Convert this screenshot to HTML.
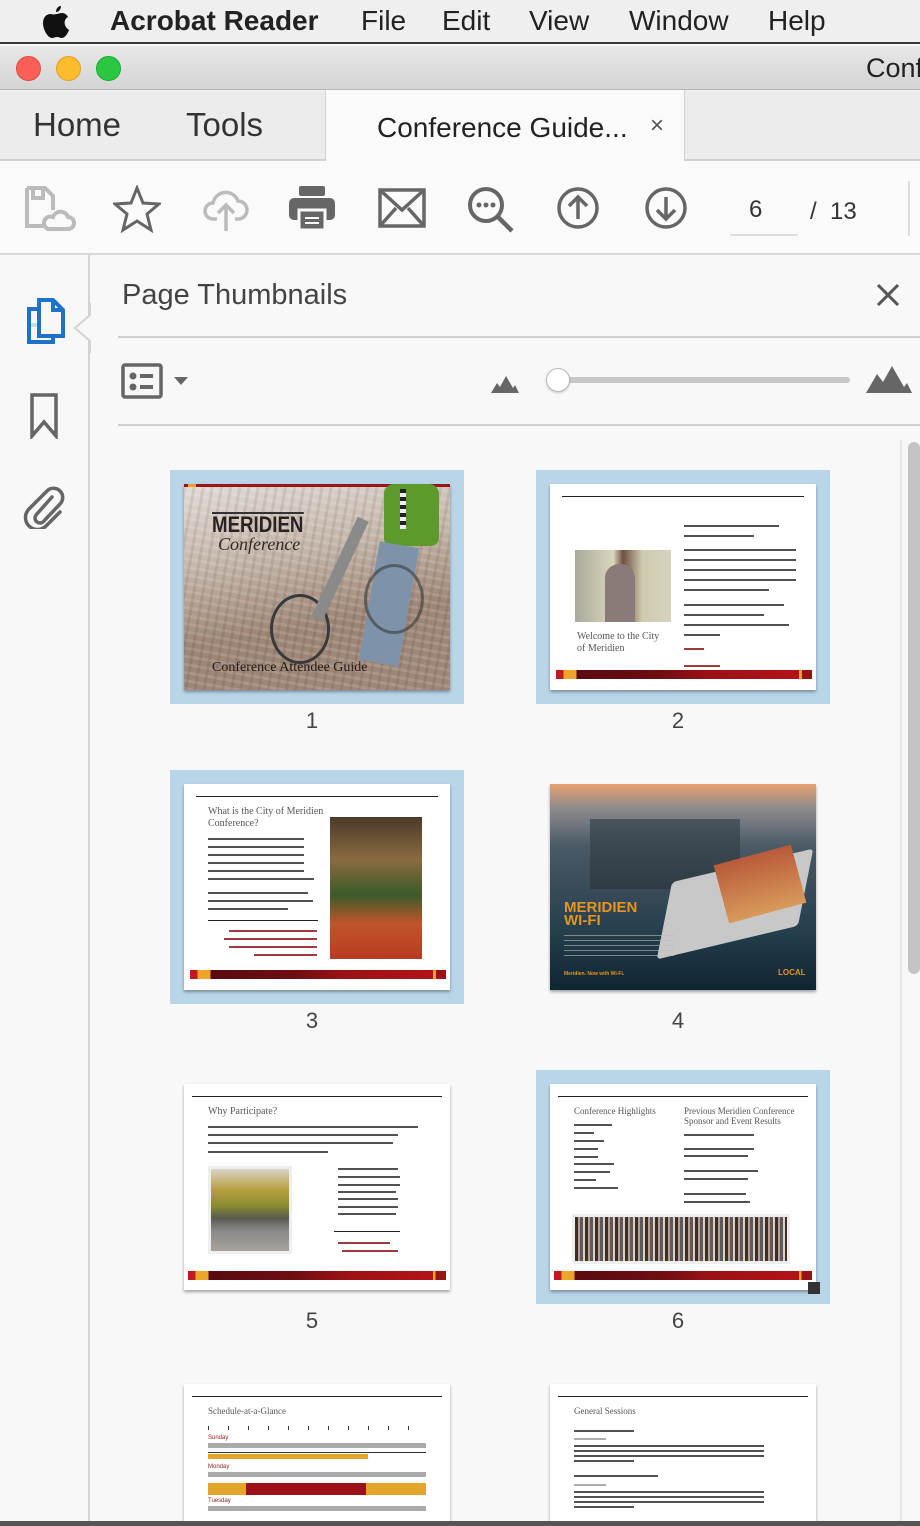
<!DOCTYPE html>
<html><head><meta charset="utf-8">
<style>
*{margin:0;padding:0;box-sizing:border-box}
body{width:920px;height:1526px;overflow:hidden;background:#f8f8f8;font-family:"Liberation Sans",sans-serif;position:relative;color:#333}
.a{position:absolute}
.menu{left:0;top:0;width:920px;height:44px;background:#efefef;border-bottom:2px solid #3a3a3a}
.menu span{position:absolute;top:5px;font-size:28px;color:#222}
.title{left:0;top:46px;width:920px;height:44px;background:linear-gradient(#e8e8e8,#d4d4d4);border-bottom:1px solid #b8b8b8}
.dot{width:25px;height:25px;border-radius:50%;top:10px}
.tabs{left:0;top:90px;width:920px;height:71px;background:#ececec;border-bottom:2px solid #d0d0d0}
.tbar{left:0;top:161px;width:920px;height:94px;background:#fafafa;border-bottom:2px solid #d9d9d9}
.rail{left:0;top:255px;width:90px;height:1271px;background:#f8f8f8;border-right:2px solid #d4d4d4}
.frame{background:#b9d5e8}
.pg{background:#fff;box-shadow:0 2px 3px rgba(0,0,0,.35)}
.foot{position:absolute;height:9px;background:linear-gradient(90deg,#c0191f 0,#c0191f 3%,#eea62a 3%,#eea62a 8%,#5a0a10 8%,#6d0d12 40%,#9a1216 60%,#b31318 95%,#e8a22a 95%,#e8a22a 96%,#9a1216 96%)}
.rule{position:absolute;height:1px;background:#222}
.num{position:absolute;font-size:22px;color:#444;width:40px;text-align:center}
.ln{position:absolute;height:2px;background:#333;opacity:.85}
.serif{font-family:"Liberation Serif",serif;color:#555}
</style></head><body>

<div class="a menu">
<svg class="a" style="left:42px;top:6px" width="28" height="32" viewBox="0 0 28 32"><path d="M19 0c0 3-2 6-5 6 0-3 2-6 5-6zM14 8c2 0 4-1 6-1 3 0 5 2 6 4-3 2-4 4-3 8 1 3 3 4 4 5-1 3-4 8-7 8-2 0-3-1-5-1s-3 1-5 1C6 32 1 24 1 17 1 11 5 8 8 8c2 0 4 1 6 0z" fill="#111"/></svg>
<span style="left:110px;font-weight:bold">Acrobat Reader</span>
<span style="left:361px">File</span><span style="left:442px">Edit</span><span style="left:529px">View</span><span style="left:629px">Window</span><span style="left:768px">Help</span>
</div>

<div class="a title">
<div class="a dot" style="left:16px;background:#fc5f57;border:1px solid #de4a42"></div>
<div class="a dot" style="left:56px;background:#fdbc2e;border:1px solid #dea123"></div>
<div class="a dot" style="left:96px;background:#29c840;border:1px solid #1aab2c"></div>
<span class="a" style="left:866px;top:7px;font-size:27px;color:#222">Conf</span>
</div>

<div class="a tabs">
<span class="a" style="left:33px;top:16px;font-size:33px;color:#333">Home</span>
<span class="a" style="left:186px;top:16px;font-size:33px;color:#333">Tools</span>
<div class="a" style="left:325px;top:0;width:360px;height:73px;background:#fafafa;border-left:1px solid #d0d0d0;border-right:1px solid #d0d0d0"></div>
<span class="a" style="left:377px;top:22px;font-size:28px;color:#222">Conference Guide...</span>
<span class="a" style="left:650px;top:22px;font-size:24px;color:#555">×</span>
</div>

<div class="a tbar">
<svg class="a" style="left:24px;top:24px" width="52" height="48" viewBox="0 0 52 48" fill="none" stroke="#bbb" stroke-width="4"><path d="M3 3h18l8 8v14M3 3v38h16"/><path d="M9 3v10h10V3" /><path d="M24 44h20a6 6 0 0 0 0-12 8 8 0 0 0-15 0 6 6 0 0 0-5 12z"/></svg>
<svg class="a" style="left:113px;top:24px" width="48" height="48" viewBox="0 0 48 48"><path d="M24 3l6 15 16 1-12 10 4 16-14-9-14 9 4-16L2 19l16-1z" fill="none" stroke="#666" stroke-width="3"/></svg>
<svg class="a" style="left:203px;top:24px" width="46" height="48" viewBox="0 0 46 48" fill="none" stroke="#bbb" stroke-width="3.5"><path d="M14 34H10a8 8 0 0 1 0-16 13 13 0 0 1 25-2 9 9 0 0 1 0 18h-3"/><path d="M23 46V20M15 28l8-8 8 8"/></svg>
<svg class="a" style="left:289px;top:25px" width="46" height="44" viewBox="0 0 46 44" fill="#666"><rect x="10" y="0" width="26" height="10" rx="2"/><rect x="0" y="12" width="46" height="22" rx="5"/><rect x="10" y="24" width="26" height="20" fill="#666" stroke="#fafafa" stroke-width="3"/><rect x="16" y="31" width="14" height="2" fill="#fafafa"/><rect x="16" y="36" width="14" height="2" fill="#fafafa"/></svg>
<svg class="a" style="left:378px;top:27px" width="48" height="40" viewBox="0 0 48 40" fill="none" stroke="#666" stroke-width="3.5"><rect x="2" y="2" width="44" height="36"/><path d="M2 2l22 20 22-20M2 38l16-18M46 38L30 20"/></svg>
<svg class="a" style="left:466px;top:24px" width="50" height="50" viewBox="0 0 50 50"><circle cx="20" cy="20" r="16" fill="none" stroke="#666" stroke-width="4"/><path d="M32 32l14 14" stroke="#666" stroke-width="4.5"/><circle cx="13" cy="20" r="2.5" fill="#666"/><circle cx="20" cy="20" r="2.5" fill="#666"/><circle cx="27" cy="20" r="2.5" fill="#666"/></svg>
<svg class="a" style="left:556px;top:25px" width="44" height="44" viewBox="0 0 44 44" fill="none" stroke="#666" stroke-width="3.5"><circle cx="22" cy="22" r="19"/><path d="M22 33V11M13 20l9-9 9 9"/></svg>
<svg class="a" style="left:644px;top:25px" width="44" height="44" viewBox="0 0 44 44" fill="none" stroke="#666" stroke-width="3.5"><circle cx="22" cy="22" r="19"/><path d="M22 11v22M13 24l9 9 9-9"/></svg>
<span class="a" style="left:749px;top:35px;font-size:24px;color:#333">6</span>
<div class="a" style="left:730px;top:73px;width:68px;height:2px;background:#ddd"></div>
<span class="a" style="left:810px;top:37px;font-size:24px;color:#333">/&nbsp; 13</span>
<div class="a" style="left:908px;top:20px;width:2px;height:55px;background:#ddd"></div>
</div>

<div class="a rail">
<svg class="a" style="left:26px;top:42px" width="42" height="48" viewBox="0 0 42 48" fill="none" stroke="#1e73c8" stroke-width="4"><rect x="4" y="26" width="16" height="4" fill="#c8dcf0" stroke="none"/><path d="M12 12H3v33h24v-6"/><path d="M13 3h14l10 10v26H13z" fill="#f8f8f8"/><path d="M27 3v10h10"/></svg>
<svg class="a" style="left:30px;top:138px" width="28" height="46" viewBox="0 0 28 46"><path d="M2 2h24v41l-12-14L2 43z" fill="none" stroke="#666" stroke-width="3.5"/></svg>
<svg class="a" style="left:22px;top:228px" width="44" height="46" viewBox="0 0 44 46"><path d="M30 14L14 32a5 5 0 0 0 7 7L38 21a9 9 0 0 0-13-13L7 26a12 12 0 0 0 17 17l14-14" fill="none" stroke="#666" stroke-width="3.5" stroke-linecap="round"/></svg>
<svg class="a" style="left:72px;top:48px" width="20" height="50" viewBox="0 0 20 50"><path d="M18 0v12L3 25l15 13v12" fill="#f8f8f8" stroke="#d4d4d4" stroke-width="2"/></svg>
</div>

<span class="a" style="left:122px;top:279px;font-size:29px;color:#444">Page Thumbnails</span>
<svg class="a" style="left:876px;top:283px" width="24" height="24" viewBox="0 0 24 24"><path d="M2 2l20 20M22 2L2 22" stroke="#555" stroke-width="3"/></svg>
<div class="a" style="left:118px;top:336px;width:802px;height:2px;background:#cfcfcf"></div>
<svg class="a" style="left:121px;top:363px" width="42" height="36" viewBox="0 0 42 36"><rect x="2" y="2" width="38" height="32" rx="2" fill="none" stroke="#666" stroke-width="3.5"/><circle cx="12" cy="13" r="3.5" fill="#666"/><circle cx="12" cy="24" r="3.5" fill="#666"/><rect x="19" y="11" width="13" height="4" fill="#666"/><rect x="19" y="22" width="13" height="4" fill="#666"/></svg>
<svg class="a" style="left:173px;top:376px" width="16" height="10" viewBox="0 0 16 10"><path d="M1 1h14L8 9z" fill="#666"/></svg>
<svg class="a" style="left:491px;top:376px" width="28" height="18" viewBox="0 0 28 18"><path d="M0 17l6-10 3 4 6-11 7 12 2-3 4 8z" fill="#666"/></svg>
<div class="a" style="left:556px;top:377px;width:294px;height:6px;border-radius:3px;background:#c8c8c8"></div>
<div class="a" style="left:546px;top:368px;width:24px;height:24px;border-radius:50%;background:#fff;border:1px solid #bbb;box-shadow:0 1px 2px rgba(0,0,0,.2)"></div>
<svg class="a" style="left:866px;top:366px" width="46" height="28" viewBox="0 0 46 28"><path d="M0 27l11-19 6 8 9-16 12 21 3-4 5 10z" fill="#666"/></svg>
<div class="a" style="left:118px;top:424px;width:802px;height:2px;background:#cfcfcf"></div>

<div class="a" style="left:900px;top:440px;width:2px;height:1086px;background:#e6e6e6"></div>
<div class="a" style="left:908px;top:442px;width:12px;height:532px;border-radius:6px;background:#c4c4c4"></div>

<!-- Thumb 1 -->
<div class="a frame" style="left:170px;top:470px;width:294px;height:234px"></div>
<div class="a pg" style="left:184px;top:484px;width:266px;height:206px;background:repeating-linear-gradient(100deg,rgba(0,0,0,.08) 0 3px,transparent 3px 9px),repeating-linear-gradient(10deg,rgba(255,255,255,.12) 0 3px,transparent 3px 8px),linear-gradient(170deg,#e2dcd6 0%,#c4b5a8 35%,#9e8676 65%,#a08878 100%);overflow:hidden">
<div class="a" style="left:0;top:0;width:266px;height:3px;background:#9b1418"></div>
<div class="a" style="left:4px;top:0;width:8px;height:3px;background:#e8a22a"></div>
<div class="a" style="left:200px;top:0;width:55px;height:62px;background:#5c9a2c;border-radius:10px 10px 8px 8px"></div>
<div class="a" style="left:216px;top:5px;width:6px;height:40px;background:repeating-linear-gradient(#222 0 4px,#eee 4px 8px)"></div>
<div class="a" style="left:185px;top:60px;width:40px;height:120px;background:#7e92aa;transform:rotate(10deg)"></div>
<div class="a" style="left:86px;top:110px;width:60px;height:70px;border:3px solid #3a3a3a;border-radius:50%"></div>
<div class="a" style="left:180px;top:80px;width:60px;height:70px;border:3px solid #3a3a3a;border-radius:50%;opacity:.6"></div>
<div class="a" style="left:150px;top:30px;width:12px;height:110px;background:#8a8a8a;transform:rotate(25deg)"></div>
<div class="a" style="left:28px;top:28px;font-weight:bold;font-size:22px;color:#2a2222;border-top:2px solid #333;line-height:22px;transform:scaleX(.85);transform-origin:left">MERIDIEN</div>
<div class="a serif" style="left:34px;top:50px;font-size:18px;font-style:italic;color:#332a26">Conference</div>
<div class="a serif" style="left:28px;top:176px;font-size:14px;color:#221a16">Conference Attendee Guide</div>
</div>
<div class="num" style="left:292px;top:708px">1</div>

<!-- Thumb 2 -->
<div class="a frame" style="left:536px;top:470px;width:294px;height:234px"></div>
<div class="a pg" style="left:550px;top:484px;width:266px;height:206px">
<div class="rule" style="left:12px;top:12px;width:242px"></div>
<div class="a" style="left:25px;top:66px;width:96px;height:72px;background:linear-gradient(90deg,#a9aa9c,#d9d6bd 40%,#6e5040 50%,#cfcbb0 70%,#d6d3bf)"></div>
<div class="a" style="left:55px;top:80px;width:30px;height:58px;background:#8a7a78;border-radius:14px 14px 0 0"></div>
<div class="a serif" style="left:27px;top:147px;font-size:10px;line-height:12px">Welcome to the City<br>of Meridien</div>
<div class="ln" style="left:134px;top:41px;width:95px"></div><div class="ln" style="left:134px;top:51px;width:70px"></div>
<div class="ln" style="left:134px;top:65px;width:112px"></div><div class="ln" style="left:134px;top:75px;width:112px"></div><div class="ln" style="left:134px;top:85px;width:112px"></div><div class="ln" style="left:134px;top:95px;width:112px"></div><div class="ln" style="left:134px;top:105px;width:85px"></div>
<div class="ln" style="left:134px;top:120px;width:100px"></div><div class="ln" style="left:134px;top:130px;width:80px"></div><div class="ln" style="left:134px;top:140px;width:105px"></div><div class="ln" style="left:134px;top:150px;width:36px"></div>
<div class="ln" style="left:134px;top:164px;width:20px;background:#8b1a1a"></div><div class="ln" style="left:134px;top:181px;width:36px;background:#8b1a1a"></div><div class="ln" style="left:134px;top:189px;width:55px;background:#8b1a1a"></div>
<div class="foot" style="left:6px;top:186px;width:256px"></div>
</div>
<div class="num" style="left:658px;top:708px">2</div>

<!-- Thumb 3 -->
<div class="a frame" style="left:170px;top:770px;width:294px;height:234px"></div>
<div class="a pg" style="left:184px;top:784px;width:266px;height:206px">
<div class="rule" style="left:12px;top:12px;width:242px"></div>
<div class="a serif" style="left:24px;top:22px;font-size:10px;line-height:12px">What is the City of Meridien<br>Conference?</div>
<div class="ln" style="left:24px;top:54px;width:96px"></div><div class="ln" style="left:24px;top:62px;width:96px"></div><div class="ln" style="left:24px;top:70px;width:96px"></div><div class="ln" style="left:24px;top:78px;width:96px"></div><div class="ln" style="left:24px;top:86px;width:96px"></div><div class="ln" style="left:24px;top:94px;width:106px"></div>
<div class="ln" style="left:24px;top:108px;width:100px"></div><div class="ln" style="left:24px;top:116px;width:105px"></div><div class="ln" style="left:24px;top:124px;width:80px"></div>
<div class="rule" style="left:24px;top:136px;width:110px"></div>
<div class="ln" style="left:45px;top:146px;width:88px;background:#8b1a1a"></div><div class="ln" style="left:40px;top:154px;width:93px;background:#8b1a1a"></div><div class="ln" style="left:45px;top:162px;width:88px;background:#8b1a1a"></div><div class="ln" style="left:70px;top:170px;width:63px;background:#8b1a1a"></div>
<div class="a" style="left:146px;top:33px;width:92px;height:142px;background:linear-gradient(180deg,#4a3a28 0%,#8a6a40 30%,#3c5a2a 55%,#c0562a 75%,#b83a22 100%)"></div>
<div class="foot" style="left:6px;top:186px;width:256px"></div>
</div>
<div class="num" style="left:292px;top:1008px">3</div>

<!-- Thumb 4 -->
<div class="a pg" style="left:550px;top:784px;width:266px;height:206px;background:linear-gradient(180deg,#e8a070 0%,#8c8a8c 12%,#4a5a66 30%,#3a4c58 50%,#26404e 70%,#102532 100%);overflow:hidden">
<div class="a" style="left:40px;top:35px;width:150px;height:70px;background:linear-gradient(#3d4a52,#2c3840);opacity:.8"></div>
<div class="a" style="left:120px;top:80px;width:130px;height:80px;background:#c8c8c8;transform:skewX(-25deg) rotate(-15deg);border-radius:4px"></div>
<div class="a" style="left:170px;top:70px;width:80px;height:60px;background:linear-gradient(#b85a3a,#d89a5a);transform:rotate(-15deg)"></div>
<div class="a" style="left:14px;top:117px;font-weight:bold;font-size:15px;line-height:13px;color:#e8941e">MERIDIEN<br>WI-FI</div>
<div class="a" style="left:14px;top:151px;width:110px;height:22px;background:repeating-linear-gradient(#bbb 0 1px,transparent 1px 5px);opacity:.6"></div>
<div class="a" style="left:14px;top:187px;font-size:5px;font-weight:bold;color:#e8941e">Meridien. Now with Wi-Fi.</div>
<div class="a" style="left:228px;top:184px;font-size:8px;font-weight:bold;color:#e8941e">LOCAL</div>
</div>
<div class="num" style="left:658px;top:1008px">4</div>

<!-- Thumb 5 -->
<div class="a pg" style="left:184px;top:1084px;width:266px;height:206px">
<div class="rule" style="left:8px;top:12px;width:250px"></div>
<div class="a serif" style="left:24px;top:22px;font-size:10px">Why Participate?</div>
<div class="ln" style="left:24px;top:42px;width:210px"></div><div class="ln" style="left:24px;top:50px;width:190px"></div><div class="ln" style="left:24px;top:58px;width:185px"></div><div class="ln" style="left:24px;top:67px;width:120px"></div>
<div class="a" style="left:24px;top:82px;width:84px;height:88px;background:#eee;padding:3px"><div style="width:100%;height:100%;background:linear-gradient(180deg,#d8d4c8 0%,#b8a040 25%,#8a8a30 45%,#5a5a50 60%,#888 75%,#a8a49c 100%)"></div></div>
<div class="ln" style="left:154px;top:84px;width:60px"></div><div class="ln" style="left:154px;top:92px;width:62px"></div><div class="ln" style="left:154px;top:100px;width:62px"></div><div class="ln" style="left:154px;top:107px;width:58px"></div><div class="ln" style="left:154px;top:114px;width:60px"></div><div class="ln" style="left:154px;top:122px;width:60px"></div><div class="ln" style="left:154px;top:129px;width:58px"></div>
<div class="rule" style="left:150px;top:147px;width:66px"></div>
<div class="ln" style="left:154px;top:158px;width:52px;background:#8b1a1a"></div><div class="ln" style="left:158px;top:166px;width:56px;background:#8b1a1a"></div>
<div class="foot" style="left:4px;top:187px;width:258px"></div>
</div>
<div class="num" style="left:292px;top:1308px">5</div>

<!-- Thumb 6 -->
<div class="a frame" style="left:536px;top:1070px;width:294px;height:234px"></div>
<div class="a pg" style="left:550px;top:1084px;width:266px;height:206px">
<div class="rule" style="left:8px;top:12px;width:250px"></div>
<div class="a serif" style="left:24px;top:22px;font-size:9px">Conference Highlights</div>
<div class="a serif" style="left:134px;top:22px;font-size:9px;line-height:10px">Previous Meridien Conference<br>Sponsor and Event Results</div>
<div class="ln" style="left:24px;top:40px;width:38px"></div><div class="ln" style="left:24px;top:48px;width:20px"></div><div class="ln" style="left:24px;top:56px;width:30px"></div><div class="ln" style="left:24px;top:64px;width:24px"></div><div class="ln" style="left:24px;top:72px;width:24px"></div><div class="ln" style="left:24px;top:79px;width:40px"></div><div class="ln" style="left:24px;top:87px;width:36px"></div><div class="ln" style="left:24px;top:95px;width:22px"></div><div class="ln" style="left:24px;top:103px;width:44px"></div>
<div class="ln" style="left:134px;top:50px;width:70px"></div><div class="ln" style="left:134px;top:64px;width:70px"></div><div class="ln" style="left:134px;top:71px;width:64px"></div><div class="ln" style="left:134px;top:86px;width:74px"></div><div class="ln" style="left:134px;top:94px;width:64px"></div><div class="ln" style="left:134px;top:109px;width:62px"></div><div class="ln" style="left:134px;top:117px;width:66px"></div>
<div class="a" style="left:22px;top:130px;width:218px;height:50px;background:#eee;padding:3px"><div style="width:100%;height:100%;background:repeating-linear-gradient(90deg,#3a3028 0 3px,#b8a090 3px 5px,#5a5a60 5px 8px,#e0d0c0 8px 10px)"></div></div>
<div class="foot" style="left:4px;top:187px;width:258px"></div>
<div class="a" style="left:258px;top:198px;width:12px;height:12px;background:#333"></div>
</div>
<div class="num" style="left:658px;top:1308px">6</div>

<!-- Thumb 7 -->
<div class="a pg" style="left:184px;top:1384px;width:266px;height:142px;overflow:hidden">
<div class="rule" style="left:8px;top:12px;width:250px"></div>
<div class="a serif" style="left:24px;top:22px;font-size:9px">Schedule-at-a-Glance</div>
<div class="a" style="left:24px;top:42px;width:218px;height:4px;background:repeating-linear-gradient(90deg,#333 0 1px,#fff 1px 20px)"></div>
<div class="a" style="left:24px;top:51px;font-size:6px;color:#8b1a1a">Sunday</div>
<div class="a" style="left:24px;top:59px;width:218px;height:5px;background:#aaa"></div>
<div class="a" style="left:24px;top:64px;width:218px;height:5px;border-bottom:1px solid #333"></div>
<div class="a" style="left:24px;top:70px;width:160px;height:5px;background:#e3a52a"></div>
<div class="a" style="left:24px;top:80px;font-size:6px;color:#8b1a1a">Monday</div>
<div class="a" style="left:24px;top:88px;width:218px;height:5px;background:#aaa"></div>
<div class="a" style="left:24px;top:99px;width:218px;height:12px;background:#e3a52a"></div>
<div class="a" style="left:62px;top:99px;width:120px;height:12px;background:#9c1218"></div>
<div class="a" style="left:24px;top:114px;font-size:6px;color:#8b1a1a">Tuesday</div>
<div class="a" style="left:24px;top:122px;width:218px;height:5px;background:#aaa"></div>
</div>

<!-- Thumb 8 -->
<div class="a pg" style="left:550px;top:1384px;width:266px;height:142px;overflow:hidden">
<div class="rule" style="left:8px;top:12px;width:250px"></div>
<div class="a serif" style="left:24px;top:22px;font-size:9px">General Sessions</div>
<div class="ln" style="left:24px;top:46px;width:60px"></div><div class="ln" style="left:24px;top:54px;width:32px;opacity:.4"></div>
<div class="ln" style="left:24px;top:61px;width:190px"></div><div class="ln" style="left:24px;top:66px;width:190px"></div><div class="ln" style="left:24px;top:71px;width:190px"></div><div class="ln" style="left:24px;top:76px;width:60px"></div>
<div class="ln" style="left:24px;top:91px;width:84px"></div><div class="ln" style="left:24px;top:100px;width:32px;opacity:.4"></div>
<div class="ln" style="left:24px;top:107px;width:190px"></div><div class="ln" style="left:24px;top:112px;width:190px"></div><div class="ln" style="left:24px;top:117px;width:190px"></div><div class="ln" style="left:24px;top:122px;width:60px"></div>
</div>

<div class="a" style="left:0;top:1521px;width:920px;height:5px;background:#555"></div>
</body></html>
